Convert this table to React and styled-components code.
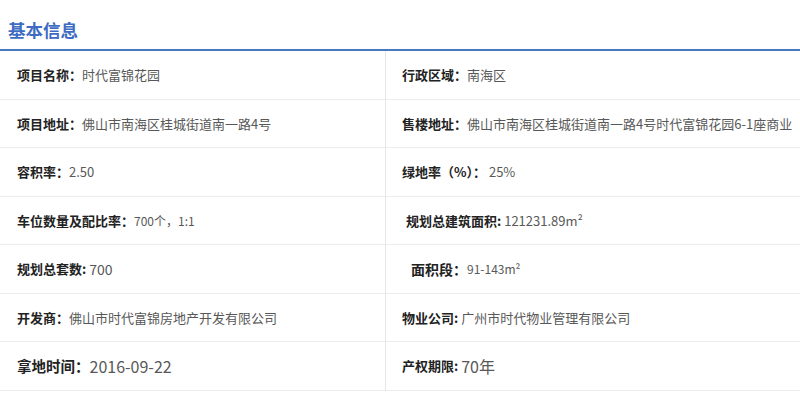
import React from 'react';
import styled, { createGlobalStyle } from 'styled-components';

const GlobalStyle = createGlobalStyle`
  body {
    margin: 0;
    background: #fff;
    font-family: "Noto Sans CJK SC", "Noto Sans", sans-serif;
  }
`;

const Section = styled.section`
  width: 800px;
`;

const Title = styled.h2`
  margin: 0;
  height: 51px;
  padding: 10px 0 0 8px;
  box-sizing: border-box;
  display: flex;
  align-items: center;
  font-size: 17.5px;
  font-weight: 700;
  color: #3d6cc2;
  border-bottom: 2px solid #4a77c3;
`;

const Table = styled.div`
  display: grid;
  grid-template-columns: 386px 1fr;
  grid-auto-rows: 48.5px;
`;

const Cell = styled.div`
  display: flex;
  align-items: center;
  border-bottom: 1px solid #ececec;
  border-right: ${p => (p.$left ? '1px solid #e6e6e6' : 'none')};
  padding-left: ${p => (p.$left ? 17 : 16) + (p.$shift || 0)}px;
  white-space: pre;
  overflow: hidden;
`;

const Label = styled.span`
  font-size: ${p => p.$size || 13}px;
  font-weight: 700;
  color: #222;
`;

const Value = styled.span`
  font-size: ${p => p.$size || 13}px;
  color: #585858;
`;

const rows = [
  [
    { label: '项目名称：', value: '时代富锦花园' },
    { label: '行政区域：', value: '南海区' },
  ],
  [
    { label: '项目地址：', value: '佛山市南海区桂城街道南一路4号' },
    { label: '售楼地址：', value: '佛山市南海区桂城街道南一路4号时代富锦花园6-1座商业' },
  ],
  [
    { label: '容积率：', value: '2.50' },
    { label: '绿地率（%）：', value: ' 25%' },
  ],
  [
    { label: '车位数量及配比率：', value: '700个，1:1', vSize: 12 },
    { label: '规划总建筑面积: ', value: '121231.89m²', shift: 4 },
  ],
  [
    { label: '规划总套数: ', value: '700', vSize: 14 },
    { label: '面积段：', value: '91-143m²', shift: 9, lSize: 14, vSize: 12 },
  ],
  [
    { label: '开发商：', value: '佛山市时代富锦房地产开发有限公司' },
    { label: '物业公司: ', value: '广州市时代物业管理有限公司' },
  ],
  [
    { label: '拿地时间：', value: '2016-09-22', lSize: 14.5, vSize: 16 },
    { label: '产权期限: ', value: '70年', vSize: 16 },
  ],
];

const App = () => {
  return (
    <Section>
      <GlobalStyle />
      <Title>基本信息</Title>
      <Table>
        {rows.map((row, i) =>
          row.map((c, j) => (
            <Cell key={`${i}-${j}`} $left={j === 0} $shift={c.shift}>
              <Label $size={c.lSize}>{c.label}</Label>
              <Value $size={c.vSize}>{c.value}</Value>
            </Cell>
          ))
        )}
      </Table>
    </Section>
  );
};

export default App;
